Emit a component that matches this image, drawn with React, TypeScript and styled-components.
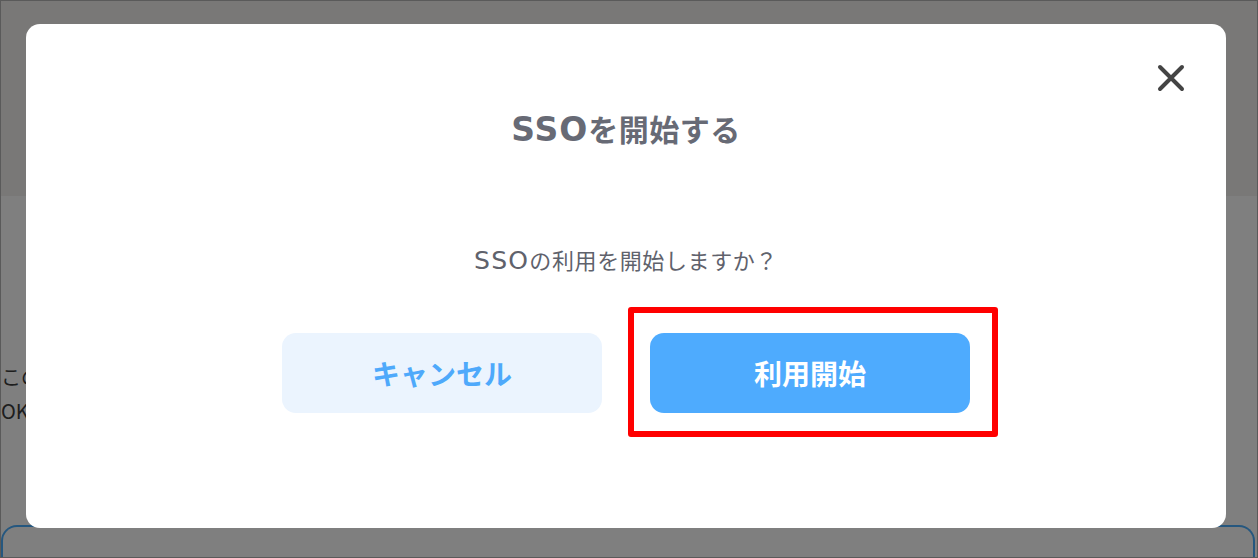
import styled, { createGlobalStyle } from "styled-components"

const GlobalStyle = createGlobalStyle`
    html, body {
        margin: 0;
        padding: 0;
        background: #ffffff;
        font-family: "Noto Sans CJK JP", "Noto Sans", sans-serif;
    }
`

const Frame = styled.div`
    position: relative;
    box-sizing: border-box;
    width: 1258px;
    height: 558px;
    border: 1px solid #5a5a5a;
    overflow: hidden;
    display: flex;
    flex-direction: column;
    background: #ffffff;
`

const PageHeader = styled.header`
    height: 195px;
    flex-shrink: 0;
    background: #f3f1ee;
`

const PageBody = styled.main`
    flex: 1;
    display: flex;
    flex-direction: column;
    padding-top: 164px;
`

const BodyText = styled.p`
    margin: 0;
    font-size: 20px;
    line-height: 34px;
    color: #3c3c3c;
    white-space: nowrap;
`

const Card = styled.section`
    flex: 1;
    margin-top: 97px;
    margin-right: 2px;
    border: 2px solid #4aaeff;
    border-bottom: none;
    border-radius: 16px 16px 0 0;
`

const Overlay = styled.div`
    position: absolute;
    inset: 0;
    background: rgba(0, 0, 0, 0.5);
    display: flex;
    align-items: flex-start;
    padding: 23px 0 0 25px;
`

const Modal = styled.div`
    position: relative;
    box-sizing: border-box;
    width: 1200px;
    height: 504px;
    background: #ffffff;
    border-radius: 14px;
    display: flex;
    flex-direction: column;
    align-items: center;
    padding-top: 85px;
`

const CloseButton = styled.button`
    position: absolute;
    top: 40px;
    right: 41px;
    width: 28px;
    height: 28px;
    padding: 0;
    border: none;
    background: none;
    display: flex;
    align-items: center;
    justify-content: center;
    cursor: pointer;
`

const Title = styled.h2`
    margin: 0;
    height: 44px;
    font-family: "DejaVu Sans", "Noto Sans CJK JP", sans-serif;
    font-size: 30px;
    line-height: 44px;
    font-weight: 700;
    letter-spacing: 0.5px;
    color: #676a75;
`

const Message = styled.p`
    margin: 94px 0 0;
    height: 30px;
    font-family: "DejaVu Sans", "Noto Sans CJK JP", sans-serif;
    font-size: 22px;
    line-height: 30px;
    letter-spacing: 0.6px;
    color: #5f626c;
`

const Latin = styled.span<{ $scale: string; $spacing: string }>`
    font-size: ${p => p.$scale};
    line-height: 1;
    letter-spacing: ${p => p.$spacing};
`

const ButtonRow = styled.div`
    display: flex;
    gap: 48px;
    margin-top: 56px;
`

const Button = styled.button<{ $primary?: boolean }>`
    width: 320px;
    height: 80px;
    border: none;
    border-radius: 14px;
    font-family: "Noto Sans CJK JP", sans-serif;
    font-size: 28px;
    font-weight: 700;
    background: ${p => p.$primary ? "#4eabfe" : "#ebf4fe"};
    color: ${p => p.$primary ? "#ffffff" : "#4ea9fb"};
    cursor: pointer;
`

const Highlight = styled.div`
    position: relative;
    &::after {
        content: "";
        position: absolute;
        top: -26px;
        left: -22px;
        right: -28px;
        bottom: -24px;
        border: 6px solid #ff0000;
        border-radius: 3px;
        pointer-events: none;
    }
`

export default function App() {
    return (
        <>
            <GlobalStyle />
            <Frame>
                <PageHeader />
                <PageBody>
                    <BodyText>このページでSSOの設定を行います。</BodyText>
                    <BodyText>OKボタンを押してください。</BodyText>
                    <Card />
                </PageBody>
                <Overlay>
                    <Modal>
                        <CloseButton aria-label="close">
                            <svg width="28" height="28" viewBox="0 0 28 28">
                                <path d="M3 3 L25 25 M25 3 L3 25" stroke="#444444" strokeWidth="4" strokeLinecap="round" fill="none" />
                            </svg>
                        </CloseButton>
                        <Title><Latin $scale="1.1em" $spacing="0.03em">SSO</Latin>を開始する</Title>
                        <Message><Latin $scale="1.14em" $spacing="0.05em">SSO</Latin>の利用を開始しますか？</Message>
                        <ButtonRow>
                            <Button>キャンセル</Button>
                            <Highlight>
                                <Button $primary>利用開始</Button>
                            </Highlight>
                        </ButtonRow>
                    </Modal>
                </Overlay>
            </Frame>
        </>
    )
}
